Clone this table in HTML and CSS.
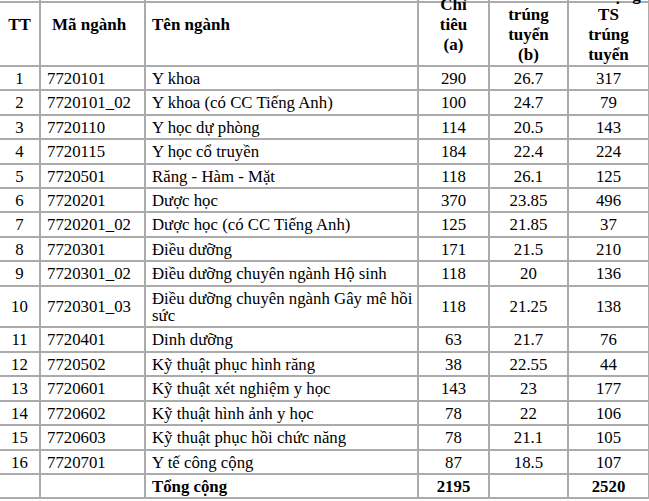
FILE: index.html
```html
<!DOCTYPE html>
<html lang="vi">
<head>
<meta charset="utf-8">
<title>Điểm trúng tuyển</title>
<link rel="stylesheet" href="styles.css">
</head>
<body>
<div class="frame">
<table class="grid">
<colgroup>
<col class="c-tt"><col class="c-ma"><col class="c-ten"><col class="c-ct"><col class="c-diem"><col class="c-ts">
</colgroup>
<thead>
<tr>
<th class="center">TT</th>
<th class="ma">Mã ngành</th>
<th class="left">Tên ngành</th>
<th class="center">Chỉ<br>tiêu<br>(a)</th>
<th class="center">Điểm<br>trúng<br>tuyển<br>(b)</th>
<th class="center">Số lượng<br>TS<br>trúng<br>tuyển</th>
</tr>
</thead>
<tbody>
<tr><td class="center">1</td><td>7720101</td><td>Y khoa</td><td class="center">290</td><td class="center">26.7</td><td class="center">317</td></tr>
<tr><td class="center">2</td><td>7720101_02</td><td>Y khoa (có CC Tiếng Anh)</td><td class="center">100</td><td class="center">24.7</td><td class="center">79</td></tr>
<tr><td class="center">3</td><td>7720110</td><td>Y học dự phòng</td><td class="center">114</td><td class="center">20.5</td><td class="center">143</td></tr>
<tr><td class="center">4</td><td>7720115</td><td>Y học cổ truyền</td><td class="center">184</td><td class="center">22.4</td><td class="center">224</td></tr>
<tr><td class="center">5</td><td>7720501</td><td>Răng - Hàm - Mặt</td><td class="center">118</td><td class="center">26.1</td><td class="center">125</td></tr>
<tr><td class="center">6</td><td>7720201</td><td>Dược học</td><td class="center">370</td><td class="center">23.85</td><td class="center">496</td></tr>
<tr><td class="center">7</td><td>7720201_02</td><td>Dược học (có CC Tiếng Anh)</td><td class="center">125</td><td class="center">21.85</td><td class="center">37</td></tr>
<tr><td class="center">8</td><td>7720301</td><td>Điều dưỡng</td><td class="center">171</td><td class="center">21.5</td><td class="center">210</td></tr>
<tr><td class="center">9</td><td>7720301_02</td><td>Điều dưỡng chuyên ngành Hộ sinh</td><td class="center">118</td><td class="center">20</td><td class="center">136</td></tr>
<tr><td class="center">10</td><td>7720301_03</td><td>Điều dưỡng chuyên ngành Gây mê hồi sức</td><td class="center">118</td><td class="center">21.25</td><td class="center">138</td></tr>
<tr><td class="center">11</td><td>7720401</td><td>Dinh dưỡng</td><td class="center">63</td><td class="center">21.7</td><td class="center">76</td></tr>
<tr><td class="center">12</td><td>7720502</td><td>Kỹ thuật phục hình răng</td><td class="center">38</td><td class="center">22.55</td><td class="center">44</td></tr>
<tr><td class="center">13</td><td>7720601</td><td>Kỹ thuật xét nghiệm y học</td><td class="center">143</td><td class="center">23</td><td class="center">177</td></tr>
<tr><td class="center">14</td><td>7720602</td><td>Kỹ thuật hình ảnh y học</td><td class="center">78</td><td class="center">22</td><td class="center">106</td></tr>
<tr><td class="center">15</td><td>7720603</td><td>Kỹ thuật phục hồi chức năng</td><td class="center">78</td><td class="center">21.1</td><td class="center">105</td></tr>
<tr><td class="center">16</td><td>7720701</td><td>Y tế công cộng</td><td class="center">87</td><td class="center">18.5</td><td class="center">107</td></tr>
<tr class="total"><td></td><td></td><td>Tổng cộng</td><td class="center">2195</td><td></td><td class="center">2520</td></tr>
</tbody>
</table>
</div>
</body>
</html>
```

FILE: styles.css
```css
html, body {
  margin: 0;
  padding: 0;
  background: #ffffff;
}
body {
  font-family: "Liberation Serif", "Times New Roman", serif;
  color: #000000;
  overflow: hidden;
}
.frame {
  border-top: 2px solid #ababab;
  margin-top: 1px;
}
.grid {
  border-collapse: collapse;
  table-layout: fixed;
  width: 650px;
  margin-left: -2px;
  margin-top: -20px;
  font-size: 16.8px;
}
.c-tt { width: 41px; }
.c-ma { width: 105px; }
.c-ten { width: 273px; }
.c-ct { width: 71px; }
.c-diem { width: 79px; }
.c-ts { width: 81px; }
.grid th,
.grid td {
  border: 2px solid #ababab;
  padding: 3px 1px 2px 6px;
  line-height: 17.4px;
  text-align: left;
  vertical-align: middle;
}
.grid th {
  font-weight: bold;
  font-size: 17px;
  height: 80px;
  line-height: 20px;
  padding: 0 3px;
}
.grid .center { text-align: center; }
.grid .left { text-align: left; padding-left: 6px; }
.grid .ma { text-align: left; padding-left: 11px; }
.grid td.center { padding-left: 3px; padding-right: 3px; }
.total td { font-weight: bold; }
```
